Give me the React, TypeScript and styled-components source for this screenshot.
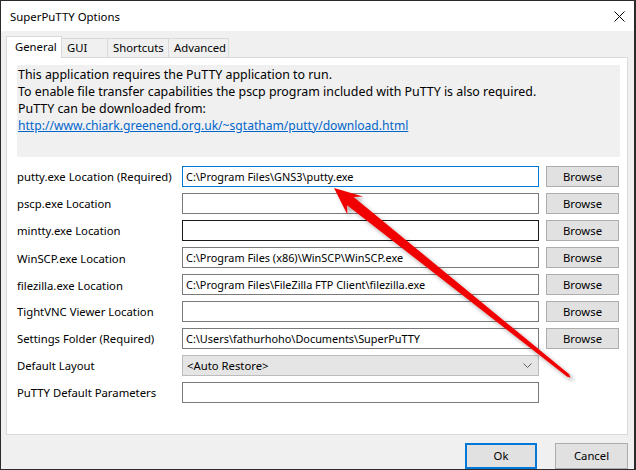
import React from 'react';
import styled, { createGlobalStyle } from 'styled-components';

const Global = createGlobalStyle`
  html, body { margin: 0; padding: 0; background: #ffffff; }
  * { box-sizing: border-box; }
`;

const FONT = `'Segoe UI', 'Noto Sans', 'DejaVu Sans', sans-serif`;

const Window = styled.div`
  position: relative;
  width: 636px;
  height: 470px;
  display: flex;
  flex-direction: column;
  border-style: solid;
  border-color: #2b2b2b;
  border-width: 1px 2px 1px 1px;
  background: #f0f0f0;
  font-family: ${FONT};
  font-size: 11.3px;
  color: #000;
  overflow: hidden;
`;

const TitleBar = styled.div`
  flex: none;
  height: 30px;
  background: #ffffff;
  display: flex;
  align-items: center;
  justify-content: space-between;
  padding: 0 9px 0 9px;
`;

const Title = styled.span`
  font-size: 11.4px;
  line-height: 16px;
  padding-top: 1px;
`;

const CloseIcon = styled.svg`
  width: 11px;
  height: 11px;
  display: block;
`;

const Body = styled.div`
  flex: 1;
  display: flex;
  flex-direction: column;
  padding: 5px 6px 0 5px;
  min-height: 0;
`;

const TabStrip = styled.div`
  position: relative;
  z-index: 1;
  display: flex;
  align-items: flex-end;
  height: 22px;
  margin-bottom: -1px;
`;

const Tab = styled.div<{ $active?: boolean; $width: number }>`
  width: ${(p) => p.$width}px;
  height: ${(p) => (p.$active ? 22 : 19)}px;
  margin-bottom: ${(p) => (p.$active ? 0 : 1)}px;
  margin-left: -1px;
  &:first-child { margin-left: 0; }
  border: 1px solid #d9d9d9;
  border-bottom: none;
  background: ${(p) => (p.$active ? '#ffffff' : '#f0f0f0')};
  display: flex;
  align-items: center;
  padding-left: ${(p) => (p.$active ? 8 : 5)}px;
  padding-bottom: ${(p) => (p.$active ? 1 : 0)}px;
  white-space: nowrap;
  line-height: 16px;
`;

const Panel = styled.div`
  flex: 1;
  min-height: 0;
  background: #ffffff;
  border: 1px solid #d9d9d9;
  padding: 7px 7px 0 10px;
  display: flex;
  flex-direction: column;
`;

const InfoBox = styled.div`
  height: 92px;
  background: #f0f0f0;
  padding: 1px 1px;
  font-size: 12.4px;
  line-height: 17px;
`;

const InfoLine = styled.div`
  white-space: nowrap;
`;

const Link = styled.a`
  color: #0066cc;
  text-decoration: underline;
  white-space: nowrap;
  font-size: 12.1px;
`;

const Form = styled.div`
  margin-top: 6px;
  display: grid;
  grid-template-columns: 158px 357px 73px;
  column-gap: 7px;
  grid-auto-rows: 27px;
  align-items: center;
`;

const Label = styled.div<{ $shift?: number }>`
  white-space: nowrap;
  line-height: 16px;
  padding-top: ${(p) => p.$shift ?? 0}px;
`;

const Field = styled.input<{ $state?: 'focus' | 'hover' | 'normal' }>`
  width: 357px;
  height: 21px;
  margin: 0;
  padding: 0 3px;
  border: 1px solid
    ${(p) => (p.$state === 'focus' ? '#0078d7' : p.$state === 'hover' ? '#1a1a1a' : '#7a7a7a')};
  background: #ffffff;
  font-family: ${FONT};
  font-size: 10.9px;
  color: #000;
  outline: none;
`;

const Combo = styled.div`
  width: 357px;
  height: 21px;
  border: 1px solid #bcbcbc;
  background: #e5e5e5;
  display: flex;
  align-items: center;
  justify-content: space-between;
  padding: 0 6px 0 4px;
  line-height: 16px;
`;

const Chevron = styled.svg`
  width: 9px;
  height: 5px;
  display: block;
`;

const Button = styled.div<{ $default?: boolean; $width?: number; $height?: number }>`
  width: ${(p) => p.$width ?? 73}px;
  height: ${(p) => p.$height ?? 21}px;
  background: #e1e1e1;
  border: ${(p) => (p.$default ? '2px solid #0078d7' : '1px solid #adadad')};
  display: flex;
  align-items: center;
  justify-content: center;
  line-height: 16px;
`;

const Footer = styled.div`
  flex: none;
  display: flex;
  justify-content: flex-end;
  gap: 18px;
  margin-top: 8px;
  height: 26px;
`;

const ArrowLayer = styled.svg`
  position: absolute;
  top: -1px;
  left: -1px;
  width: 636px;
  height: 470px;
  pointer-events: none;
  z-index: 5;
`;

type Row = {
  label: string;
  value?: string;
  state?: 'focus' | 'hover' | 'normal';
  browse?: boolean;
  combo?: string;
  shift?: number;
};

const rows: Row[] = [
  { label: 'putty.exe Location (Required)', value: 'C:\\Program Files\\GNS3\\putty.exe', state: 'focus', browse: true },
  { label: 'pscp.exe Location', value: '', browse: true },
  { label: 'mintty.exe Location', value: '', state: 'hover', browse: true },
  { label: 'WinSCP.exe Location', value: 'C:\\Program Files (x86)\\WinSCP\\WinSCP.exe', browse: true, shift: 3 },
  { label: 'filezilla.exe Location', value: 'C:\\Program Files\\FileZilla FTP Client\\filezilla.exe', browse: true, shift: 3 },
  { label: 'TightVNC Viewer Location', value: '', browse: true },
  { label: 'Settings Folder (Required)', value: 'C:\\Users\\fathurhoho\\Documents\\SuperPuTTY', browse: true },
  { label: 'Default Layout', combo: '<Auto Restore>' },
  { label: 'PuTTY Default Parameters', value: '' },
];

function arrowPoints() {
  const T = [334, 188];
  const d = [236, 189];
  const len = Math.hypot(d[0], d[1]);
  const u = [d[0] / len, d[1] / len];
  const n = [-u[1], u[0]];
  const P = (a: number, b: number) =>
    `${(T[0] + a * u[0] + b * n[0]).toFixed(1)},${(T[1] + a * u[1] + b * n[1]).toFixed(1)}`;
  return [
    P(0, 0),
    P(27, 12.5),
    P(21, 5.2),
    P(300, 1.6),
    P(303, 0),
    P(300, -1.6),
    P(21, -5.2),
    P(28, -11.5),
  ].join(' ');
}

export default function App() {
  const pts = arrowPoints();
  return (
    <>
      <Global />
      <Window>
        <TitleBar>
          <Title>SuperPuTTY Options</Title>
          <CloseIcon viewBox="0 0 11 11">
            <path d="M0.5 0.5 L10.5 10.5 M10.5 0.5 L0.5 10.5" stroke="#000" strokeWidth="1" fill="none" />
          </CloseIcon>
        </TitleBar>
        <Body>
          <TabStrip>
            <Tab $active $width={56}>General</Tab>
            <Tab $width={47}>GUI</Tab>
            <Tab $width={62}>Shortcuts</Tab>
            <Tab $width={61}>Advanced</Tab>
          </TabStrip>
          <Panel>
            <InfoBox>
              <InfoLine>This application requires the PuTTY application to run.</InfoLine>
              <InfoLine>To enable file transfer capabilities the pscp program included with PuTTY is also required.</InfoLine>
              <InfoLine>PuTTY can be downloaded from:</InfoLine>
              <InfoLine>
                <Link href="#">http://www.chiark.greenend.org.uk/~sgtatham/putty/download.html</Link>
              </InfoLine>
            </InfoBox>
            <Form>
              {rows.map((r) => (
                <React.Fragment key={r.label}>
                  <Label $shift={r.shift}>{r.label}</Label>
                  {r.combo ? (
                    <Combo>
                      <span>{r.combo}</span>
                      <Chevron viewBox="0 0 9 5">
                        <path d="M0.5 0.5 L4.5 4.5 L8.5 0.5" stroke="#606060" strokeWidth="1" fill="none" />
                      </Chevron>
                    </Combo>
                  ) : (
                    <Field readOnly value={r.value} $state={r.state ?? 'normal'} />
                  )}
                  {r.browse ? <Button>Browse</Button> : <span />}
                </React.Fragment>
              ))}
            </Form>
          </Panel>
          <Footer>
            <Button $default $width={72} $height={26}>Ok</Button>
            <Button $width={73} $height={26}>Cancel</Button>
          </Footer>
        </Body>
        <ArrowLayer viewBox="0 0 636 470">
          <defs>
            <filter id="sh" x="-20%" y="-20%" width="140%" height="140%">
              <feGaussianBlur in="SourceAlpha" stdDeviation="2.2" />
              <feOffset dx="3" dy="3" result="b" />
              <feComponentTransfer>
                <feFuncA type="linear" slope="0.35" />
              </feComponentTransfer>
              <feMerge>
                <feMergeNode />
                <feMergeNode in="SourceGraphic" />
              </feMerge>
            </filter>
          </defs>
          <polygon points={pts} fill="#f00000" filter="url(#sh)" />
        </ArrowLayer>
      </Window>
    </>
  );
}
